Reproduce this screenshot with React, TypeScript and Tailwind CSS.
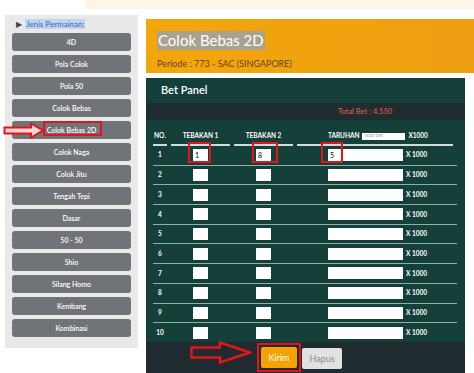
import React from "react";

const games = [
  "4D",
  "Pola Colok",
  "Pola 50",
  "Colok Bebas",
  "Colok Bebas 2D",
  "Colok Naga",
  "Colok Jitu",
  "Tengah Tepi",
  "Dasar",
  "50 - 50",
  "Shio",
  "Silang Homo",
  "Kembang",
  "Kombinasi",
];

const rows = [1, 2, 3, 4, 5, 6, 7, 8, 9, 10];

const first: Record<number, [string, string, string]> = { 1: ["1", "8", "5"] };

const RedBox = ({ className }: { className: string }) => (
  <span className={`absolute border-2 border-[#e3151a] pointer-events-none ${className}`} />
);

const Sidebar = () => (
  <aside className="relative ml-[5px] mt-[6px] w-[133px] bg-[#e9e9e9] px-[7px] pb-[11px]">
    <div className="flex h-[18px] items-center gap-[3px] pl-[4px]">
      <span className="text-[8px] leading-none text-[#444]">▶</span>
      <span className="bg-[#bcd6f2] px-[1px] text-[8px] leading-[10px] text-[#3d6a9a]">
        Jenis Permainan:
      </span>
    </div>
    <div className="flex flex-col gap-[4px]">
      {games.map((g) => (
        <div
          key={g}
          className="relative flex h-[18px] items-center justify-center rounded-[3px] bg-[#707478] text-[7px] font-semibold text-white"
        >
          {g}
          {g === "Colok Bebas 2D" && <RedBox className="left-[31px] top-0 h-[15px] w-[59px]" />}
        </div>
      ))}
    </div>
    {/* arrow pointing at the selected game */}
    <svg
      className="absolute left-[-2px] top-[107px]"
      width="42"
      height="17"
      viewBox="0 0 42 17"
    >
      <polygon
        points="1.5,5.5 28,5.5 28,1.5 40,8.5 28,15.5 28,11.5 1.5,11.5"
        fill="#f4d6d6"
        stroke="#e3151a"
        strokeWidth="2"
        strokeLinejoin="miter"
      />
    </svg>
  </aside>
);

const BetPanel = () => (
  <div className="mr-[9px] mt-[5px] bg-[#15403a]">
    <div className="flex h-[25px] items-center pl-[15px] text-[11px] font-semibold text-white">
      Bet Panel
    </div>
    <div className="flex h-[17px] items-center bg-[#1f2d31] pl-[192px] text-[7.5px] text-[#e0604e]">
      Total Bet : 4.550
    </div>

    <div className="w-[311px] pl-[7px] pt-[8px]">
      {/* header */}
      <div className="flex gap-[4px] text-[6.5px] font-bold text-white">
        <div className="flex h-[18px] w-[14px] items-center border-b-2 border-[#cfdcd9] pl-[1px]">NO.</div>
        <div className="flex h-[18px] w-[59px] items-center justify-center border-b-2 border-[#cfdcd9]">
          TEBAKAN 1
        </div>
        <div className="flex h-[18px] w-[59px] items-center justify-center border-b-2 border-[#cfdcd9]">
          TEBAKAN 2
        </div>
        <div className="flex h-[18px] w-[156px] items-center gap-[3px] border-b-2 border-[#cfdcd9] pl-[31px]">
          <span>TARUHAN</span>
          <span className="flex h-[7px] w-[43px] items-center bg-white pl-[2px] text-[5px] font-normal text-[#aaa]">
            auto bet
          </span>
          <span>X1000</span>
        </div>
      </div>

      {/* rows */}
      {rows.map((n) => {
        const v = first[n];
        return (
          <div
            key={n}
            className={`flex h-[18.7px] items-center gap-[4px] text-[6.5px] font-bold text-white ${
              n > 1 ? "box-content border-t border-[#8fb0aa]" : ""
            }`}
          >
            <div className="w-[14px] text-center">{n}</div>
            <div className="flex w-[59px] justify-center">
              <div className="relative">
                <input
                  readOnly
                  value={v ? v[0] : ""}
                  className="block h-[12px] w-[15px] bg-white px-[2px] text-[7px] font-normal text-black outline-none"
                />
                {v && <RedBox className="-left-[5px] -top-[7px] h-[21px] w-[23px]" />}
              </div>
            </div>
            <div className="flex w-[59px] justify-center">
              <div className="relative">
                <input
                  readOnly
                  value={v ? v[1] : ""}
                  className="block h-[12px] w-[15px] bg-white px-[2px] text-[7px] font-normal text-black outline-none"
                />
                {v && <RedBox className="-left-[4px] -top-[7px] h-[21px] w-[26px]" />}
              </div>
            </div>
            <div className="flex w-[156px] items-center gap-[3px] pl-[31px]">
              <div className="relative">
                <input
                  readOnly
                  value={v ? v[2] : ""}
                  className="block h-[12px] w-[75px] bg-white px-[2px] text-[7px] font-normal text-black outline-none"
                />
                {v && <RedBox className="-left-[7px] -top-[7px] h-[21px] w-[22px]" />}
              </div>
              <span>X 1000</span>
            </div>
          </div>
        );
      })}
    </div>

    {/* actions */}
    <div className="relative flex h-[40px] gap-[5px] bg-[#1f2b2f] pl-[115px] pt-[5px]">
      <svg className="absolute left-[44px] top-[-1px]" width="62" height="23" viewBox="0 0 62 23">
        <polygon
          points="1.5,6.5 30,6.5 30,1.5 60,11.5 30,21.5 30,16.5 1.5,16.5"
          fill="none"
          stroke="#e3151a"
          strokeWidth="2.5"
        />
      </svg>
      <div className="relative">
        <button className="flex h-[21px] w-[36px] items-center justify-center rounded-[2px] bg-[#f5a300] text-[9px] text-white">
          Kirim
        </button>
        <RedBox className="-left-[4px] -top-[4px] h-[29px] w-[44px]" />
      </div>
      <button className="mt-[1px] flex h-[21px] w-[40px] items-center justify-center rounded-[2px] bg-[#e1e1e1] text-[9px] text-[#8a8a8a]">
        Hapus
      </button>
    </div>
  </div>
);

export default function App() {
  return (
    <div className="relative h-[373px] w-[474px] overflow-hidden bg-white font-['Lato',sans-serif]">
      <div className="ml-[85px] h-[9px] bg-[#fdf6e6]" />
      <div className="flex items-start">
        <Sidebar />
        <main className="ml-[8px] mt-[10px] flex-1">
          <div className="h-[54px] bg-gradient-to-r from-[#f3a60c] to-[#ef9f12] pl-[11px] pt-[9px]">
            <span className="inline-block bg-[#a7a38e] px-[1px] text-[15px] leading-[19px] text-white">
              Colok Bebas 2D
            </span>
            <div className="mt-[5px] text-[9px] text-[#6b4400]">Periode : 773 - SAC (SINGAPORE)</div>
          </div>
          <BetPanel />
        </main>
      </div>
    </div>
  );
}
